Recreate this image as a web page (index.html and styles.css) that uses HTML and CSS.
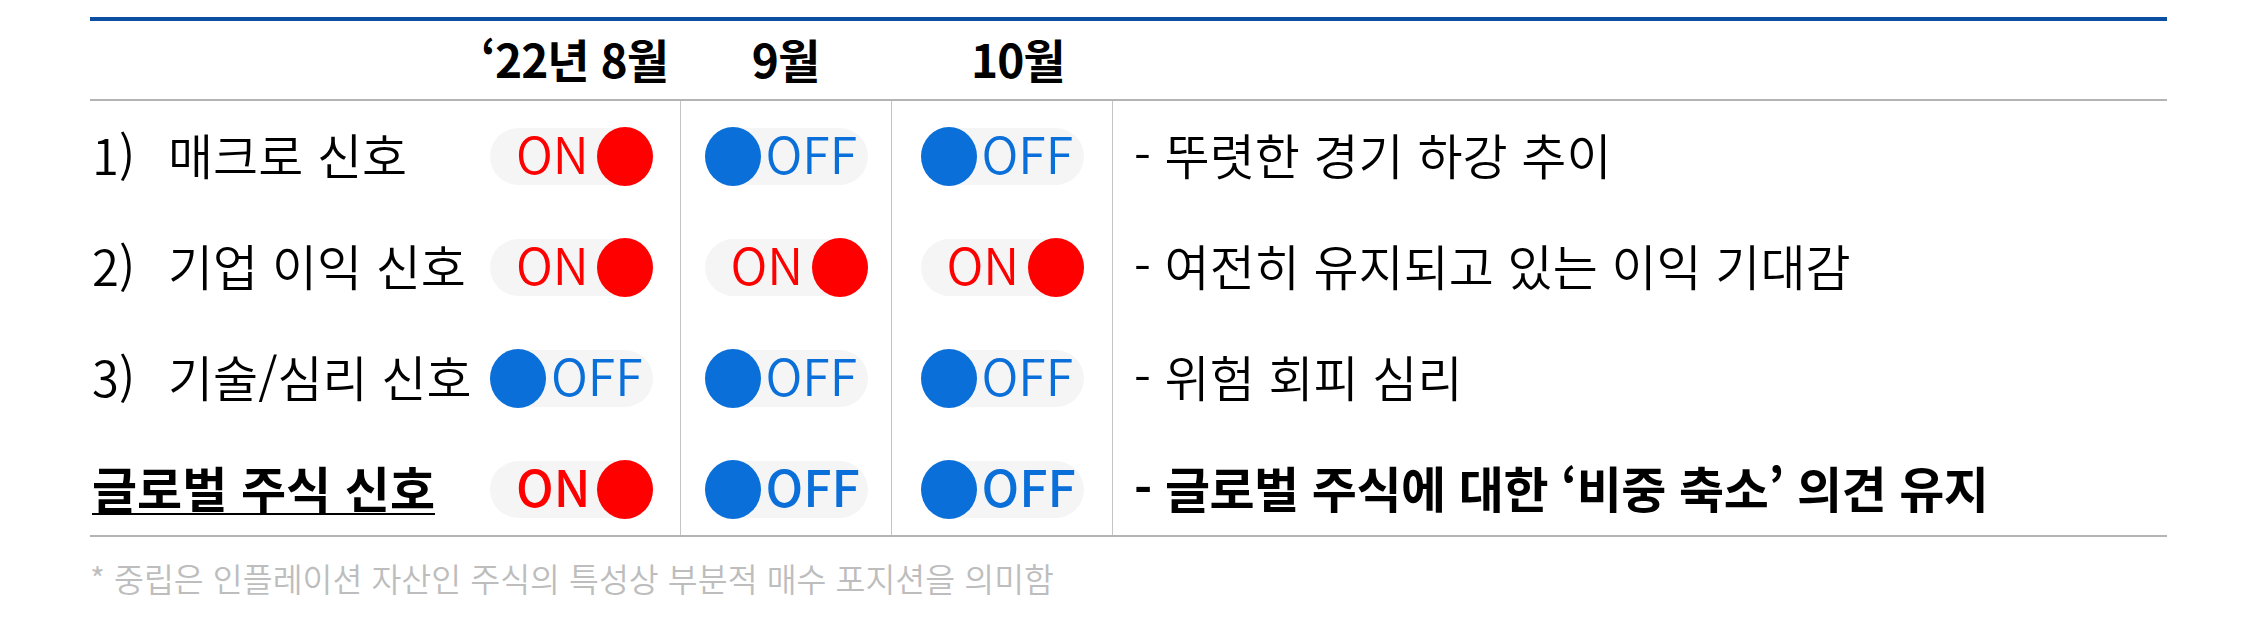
FILE: index.html
```html
<!DOCTYPE html>
<html lang="ko">
<head>
<meta charset="utf-8">
<title>글로벌 주식 신호</title>
<link rel="stylesheet" href="styles.css">
</head>
<body>
<div class="table">
  <div class="head">
    <div class="hcell h1">‘22년 8월</div>
    <div class="hcell h2">9월</div>
    <div class="hcell h3">10월</div>
    <div class="hcell"></div>
  </div>
  <div class="body">
    <div class="row">
      <div class="cell first"><span class="num">1)</span><span class="label">매크로 신호</span><span class="toggle on"><span class="txt">ON</span><span class="knob"></span></span></div>
      <div class="cell mid"><span class="toggle off"><span class="knob"></span><span class="txt">OFF</span></span></div>
      <div class="cell mid"><span class="toggle off"><span class="knob"></span><span class="txt">OFF</span></span></div>
      <div class="cell desc">- 뚜렷한 경기 하강 추이</div>
    </div>
    <div class="row">
      <div class="cell first"><span class="num">2)</span><span class="label">기업 이익 신호</span><span class="toggle on"><span class="txt">ON</span><span class="knob"></span></span></div>
      <div class="cell mid"><span class="toggle on"><span class="txt">ON</span><span class="knob"></span></span></div>
      <div class="cell mid"><span class="toggle on"><span class="txt">ON</span><span class="knob"></span></span></div>
      <div class="cell desc">- 여전히 유지되고 있는 이익 기대감</div>
    </div>
    <div class="row">
      <div class="cell first"><span class="num">3)</span><span class="label">기술/심리 신호</span><span class="toggle off"><span class="knob"></span><span class="txt">OFF</span></span></div>
      <div class="cell mid"><span class="toggle off"><span class="knob"></span><span class="txt">OFF</span></span></div>
      <div class="cell mid"><span class="toggle off"><span class="knob"></span><span class="txt">OFF</span></span></div>
      <div class="cell desc">- 위험 회피 심리</div>
    </div>
    <div class="row total">
      <div class="cell first"><span class="label strong">글로벌 주식 신호</span><span class="toggle on"><span class="txt">ON</span><span class="knob"></span></span></div>
      <div class="cell mid"><span class="toggle off"><span class="knob"></span><span class="txt">OFF</span></span></div>
      <div class="cell mid"><span class="toggle off"><span class="knob"></span><span class="txt">OFF</span></span></div>
      <div class="cell desc">- 글로벌 주식에 대한 ‘비중 축소’ 의견 유지</div>
    </div>
  </div>
  <div class="note">* 중립은 인플레이션 자산인 주식의 특성상 부분적 매수 포지션을 의미함</div>
</div>
</body>
</html>
```
FILE: styles.css
```css
html, body {
  margin: 0;
  padding: 0;
  background: #ffffff;
}
body {
  font-family: "Noto Sans CJK KR", "Noto Sans", sans-serif;
  color: #000000;
}
.table {
  margin: 17px 0 0 90px;
  width: 2077px;
}
.head {
  display: grid;
  grid-template-columns: 590px 211px 221px 1fr;
  height: 78px;
  border-top: 4px solid #0b4ea2;
  border-bottom: 2px solid #b4b4b4;
}
.hcell {
  display: flex;
  align-items: center;
  font-size: 46px;
  font-weight: 700;
  letter-spacing: -1px;
  padding-bottom: 4px;
}
.h1 {
  justify-content: flex-end;
  padding-right: 12px;
}
.h2 {
  justify-content: center;
}
.h3 {
  padding-left: 80px;
}
.body {
  border-bottom: 2px solid #b4b4b4;
}
.row {
  display: grid;
  grid-template-columns: 590px 211px 221px 1fr;
  height: 111px;
}
.row.total {
  height: 101px;
}
.cell {
  display: flex;
  align-items: center;
  font-size: 49px;
  font-weight: 350;
}
.total .cell {
  padding-top: 10px;
}
.first {
  padding-left: 2px;
}
.mid {
  border-left: 1px solid #c4c4c4;
  justify-content: center;
}
.desc {
  border-left: 1px solid #c4c4c4;
  padding-left: 21px;
  padding-bottom: 6px;
  white-space: nowrap;
}
.num {
  width: 76px;
  flex: none;
  padding-bottom: 6px;
}
.label {
  padding-bottom: 6px;
  white-space: nowrap;
}
.label.strong {
  font-weight: 700;
  text-decoration: underline;
  text-decoration-thickness: 2px;
  text-underline-offset: 5px;
}
.total .desc {
  font-weight: 700;
  letter-spacing: -0.5px;
}
.toggle {
  margin-left: auto;
  margin-right: 27px;
  width: 163px;
  height: 57px;
  border-radius: 29px;
  background: #f5f5f5;
  display: flex;
  align-items: center;
  flex: none;
  box-sizing: border-box;
}
.mid .toggle {
  margin: 0;
}
.knob {
  width: 56px;
  height: 59px;
  border-radius: 50%;
  flex: none;
}
.txt {
  font-size: 50px;
  font-weight: 350;
  padding-bottom: 10px;
  line-height: 1;
}
.total .txt {
  font-weight: 500;
}
.on .txt {
  color: #ff0000;
  padding-left: 26px;
}
.on .knob {
  background: #ff0000;
  margin-left: auto;
}
.off .knob {
  background: #0a6fd9;
}
.off .txt {
  color: #0a6fd9;
  padding-left: 5px;
}
.note {
  margin-top: 23px;
  font-size: 32.5px;
  font-weight: 350;
  color: #bdbdbd;
  line-height: 36px;
}
```
